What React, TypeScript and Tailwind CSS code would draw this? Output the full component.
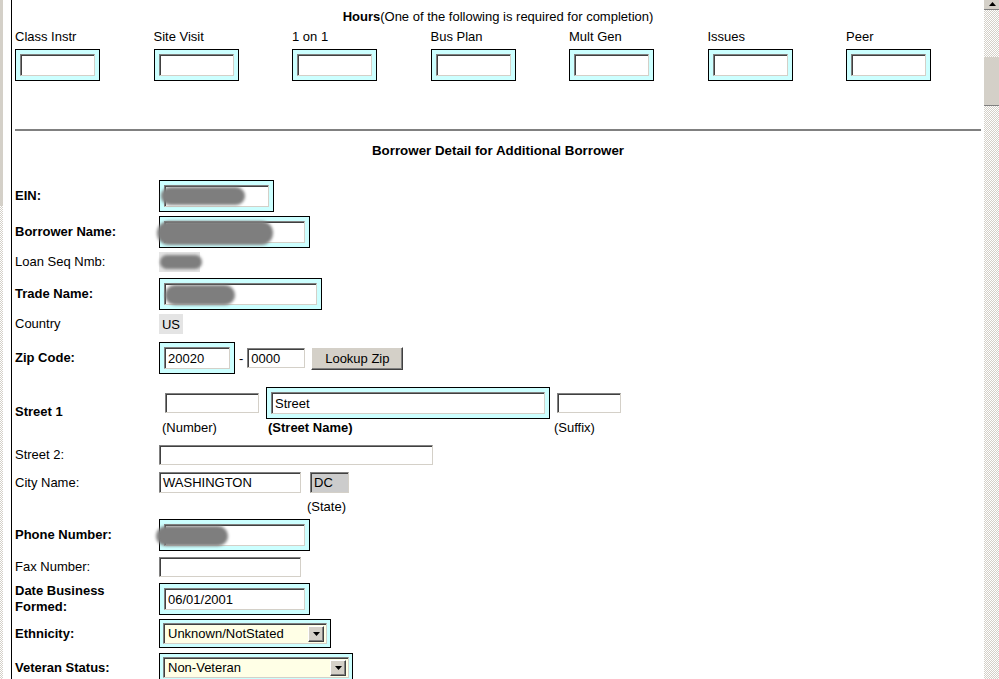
import type { ReactNode } from "react";

const checker =
  "bg-[repeating-conic-gradient(#d4d0c8_0_25%,#ffffff_0_50%)] [background-size:2px_2px]";

// sunken win98-style text field
function Field({ className = "", children }: { className?: string; children?: ReactNode }) {
  return (
    <div
      className={`relative flex items-center bg-white border border-t-[#808080] border-l-[#808080] border-r-[#d4d0c8] border-b-[#d4d0c8] shadow-[inset_1px_1px_0_#404040] pl-[3px] text-[13px] leading-none ${className}`}
    >
      {children}
    </div>
  );
}

// required field wrapper (cyan)
function Req({ children, className = "" }: { children: ReactNode; className?: string }) {
  return <div className={`border border-black bg-[#ccffff] p-[4px] ${className}`}>{children}</div>;
}

function Smudge({ className }: { className: string }) {
  return (
    <div className={`absolute rounded-full bg-[#808080] blur-[1.5px] ${className}`}>
      <div className="h-full w-full rounded-full bg-[radial-gradient(circle,#6a6a6a_1px,transparent_1px)] [background-size:4px_3px] opacity-60" />
    </div>
  );
}

function Select({ value, className }: { value: string; className: string }) {
  return (
    <div
      className={`flex items-center justify-between bg-[#ffffe6] border border-t-[#808080] border-l-[#808080] border-r-[#d4d0c8] border-b-[#d4d0c8] shadow-[inset_1px_1px_0_#404040] pl-[4px] pr-[2px] text-[13px] leading-none ${className}`}
    >
      <span>{value}</span>
      <span className="flex h-[16px] w-[16px] items-center justify-center bg-[#d4d0c8] border border-t-white border-l-white border-b-[#404040] border-r-[#404040] shadow-[inset_-1px_-1px_0_#808080]">
        <svg width="7" height="4" viewBox="0 0 7 4">
          <path d="M0 0h7L3.5 4z" fill="#000" />
        </svg>
      </span>
    </div>
  );
}

function Label({ children, bold }: { children: ReactNode; bold?: boolean }) {
  return (
    <div className={`w-[144px] shrink-0 text-[13px] leading-[16px] ${bold ? "font-bold" : ""}`}>{children}</div>
  );
}

const hours = ["Class Instr", "Site Visit", "1 on 1", "Bus Plan", "Mult Gen", "Issues", "Peer"];

export default function App() {
  return (
    <div className="flex h-[679px] w-[999px] overflow-hidden bg-white text-black font-['Liberation_Sans',Arial,sans-serif]">
      {/* cropped scrollbar of the frame to the left */}
      <div className="flex w-[3px] shrink-0 flex-col">
        <div className="h-[206px] bg-[#d4d0c8]" />
        <div className={`flex-1 ${checker}`} />
      </div>
      <div className="w-[8px] shrink-0" />
      <div className="w-[1px] shrink-0 bg-black" />

      <main className="w-[972px] shrink-0 overflow-hidden">
        <div className="pt-[10px] text-center text-[13px] leading-[14px]">
          <b>Hours</b>(One of the following is required for completion)
        </div>

        <div className="mt-[6px] grid grid-cols-[repeat(7,138.5px)] pl-[3px]">
          {hours.map((h) => (
            <div key={h} className="flex flex-col items-start">
              <div className="text-[13px] leading-[14px]">{h}</div>
              <Req className="mt-[5px]">
                <Field className="h-[22px] w-[75px]" />
              </Req>
            </div>
          ))}
        </div>

        <div className="ml-[3px] mt-[48px] h-[2px] w-[966px] bg-[#808080]" />

        <div className="mt-[12px] text-center text-[13.33px] font-bold leading-[15px]">
          Borrower Detail for Additional Borrower
        </div>

        <div className="mt-[22px] flex flex-col pl-[3px]">
          <div className="flex items-center">
            <Label bold>EIN:</Label>
            <Req>
              <Field className="h-[22px] w-[105px]">
                <Smudge className="-left-[4px] top-[1px] h-[18px] w-[84px]" />
              </Field>
            </Req>
          </div>

          <div className="mt-[4px] flex items-center">
            <Label bold>Borrower Name:</Label>
            <Req>
              <Field className="h-[22px] w-[141px]">
                <Smudge className="-left-[8px] top-[-1px] h-[24px] w-[116px]" />
              </Field>
            </Req>
          </div>

          <div className="mt-[4px] flex h-[20px] items-center">
            <Label>Loan Seq Nmb:</Label>
            <div className="relative h-[20px] w-[41px] bg-[#e4e4e4]">
              <Smudge className="left-[1px] top-[3px] h-[14px] w-[42px] bg-[#9a9a9a]" />
            </div>
          </div>

          <div className="mt-[6px] flex items-center">
            <Label bold>Trade Name:</Label>
            <Req>
              <Field className="h-[22px] w-[153px]">
                <Smudge className="left-[0px] top-[1px] h-[20px] w-[70px]" />
              </Field>
            </Req>
          </div>

          <div className="mt-[4px] flex h-[20px] items-center">
            <Label>Country</Label>
            <div className="flex h-[20px] w-[24px] items-center justify-center bg-[#e4e4e4] text-[13px] leading-none">
              US
            </div>
          </div>

          <div className="mt-[8px] flex items-center">
            <Label bold>Zip Code:</Label>
            <Req>
              <Field className="h-[22px] w-[66px]">20020</Field>
            </Req>
            <span className="ml-[4px] text-[13px] leading-none">-</span>
            <Field className="ml-[4px] h-[20px] w-[58px]">0000</Field>
            <button className="ml-[6px] flex h-[23px] w-[92px] items-center justify-center bg-[#d4d0c8] border border-t-white border-l-white border-b-[#404040] border-r-[#404040] shadow-[inset_-1px_-1px_0_#808080] text-[13px] leading-none">
              Lookup Zip
            </button>
          </div>

          <div className="mt-[13px] flex h-[50px] items-center">
            <Label bold>Street 1</Label>
            <div className="flex h-full items-start pl-[3px]">
              <div className="flex w-[104px] flex-col">
                <div className="flex h-[32px] items-center">
                  <Field className="ml-[3px] h-[20px] w-[94px]" />
                </div>
                <div className="mt-[1px] text-[13px] leading-[15px]">(Number)</div>
              </div>
              <div className="flex w-[284px] flex-col">
                <Req>
                  <Field className="h-[22px] w-[274px]">Street</Field>
                </Req>
                <div className="mt-[1px] pl-[2px] text-[13px] font-bold leading-[15px]">(Street Name)</div>
              </div>
              <div className="ml-[4px] flex flex-col">
                <div className="flex h-[32px] items-center">
                  <Field className="ml-[3px] h-[20px] w-[64px]" />
                </div>
                <div className="mt-[1px] text-[13px] leading-[15px]">(Suffix)</div>
              </div>
            </div>
          </div>

          <div className="mt-[8px] flex items-center">
            <Label>Street 2:</Label>
            <Field className="h-[20px] w-[274px]" />
          </div>

          <div className="mt-[7px] flex items-start">
            <div className="flex h-[21px] items-center">
              <Label>City Name:</Label>
            </div>
            <Field className="h-[21px] w-[142px]">WASHINGTON</Field>
            <div className="ml-[6px] flex flex-col">
              <Field className="ml-[3px] h-[21px] w-[39px] !bg-[#cccccc]">DC</Field>
              <div className="mt-[7px] text-[13px] leading-[14px]">(State)</div>
            </div>
          </div>

          <div className="mt-[5px] flex items-center">
            <Label bold>Phone Number:</Label>
            <Req>
              <Field className="h-[22px] w-[141px]">
                <Smudge className="-left-[9px] top-[1px] h-[20px] w-[72px]" />
              </Field>
            </Req>
          </div>

          <div className="mt-[6px] flex items-center">
            <Label>Fax Number:</Label>
            <Field className="h-[20px] w-[142px]" />
          </div>

          <div className="mt-[6px] flex items-center">
            <Label bold>
              Date Business
              <br />
              Formed:
            </Label>
            <Req>
              <Field className="h-[22px] w-[141px]">06/01/2001</Field>
            </Req>
          </div>

          <div className="mt-[4px] flex items-center">
            <Label bold>Ethnicity:</Label>
            <Req className="!p-[3px]">
              <Select value="Unknown/NotStated" className="h-[21px] w-[164px]" />
            </Req>
          </div>

          <div className="mt-[5px] flex items-center">
            <Label bold>Veteran Status:</Label>
            <Req className="!p-[3px]">
              <Select value="Non-Veteran" className="h-[21px] w-[186px]" />
            </Req>
          </div>
        </div>
      </main>

      {/* window scrollbar, cut at the right edge */}
      <div className="flex w-[15px] shrink-0 flex-col">
        <div className="flex h-[10px] items-center justify-center bg-[#d4d0c8] border-b border-[#808080]">
          <svg width="7" height="4" viewBox="0 0 7 4" className="-mt-[2px] ml-[1px]">
            <path d="M3.5 0L7 4H0z" fill="#000" />
          </svg>
        </div>
        <div className={`h-[47px] ${checker}`} />
        <div className="h-[49px] bg-[#d4d0c8] border-b border-[#808080]" />
        <div className={`flex-1 ${checker}`} />
      </div>
    </div>
  );
}
